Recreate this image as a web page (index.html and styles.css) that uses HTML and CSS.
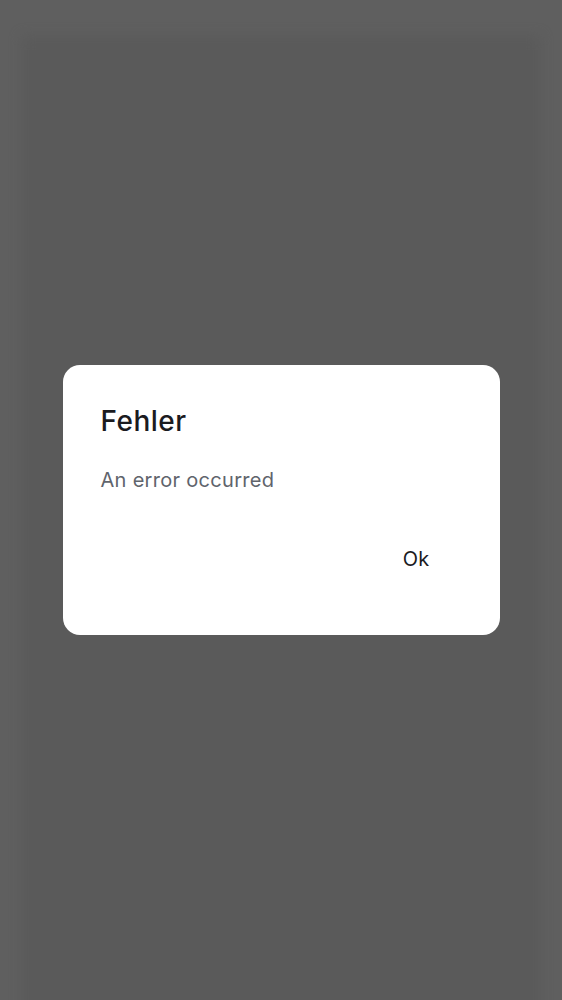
FILE: index.html
```html
<!DOCTYPE html>
<html lang="de">
<head>
<meta charset="utf-8">
<title>Fehler</title>
<link rel="stylesheet" href="styles.css">
</head>
<body>
<div class="screen">
  <div class="backdrop-panel"></div>
  <div class="scrim">
    <div class="dialog" role="alertdialog">
      <h2 class="dialog-title">Fehler</h2>
      <p class="dialog-message">An error occurred</p>
      <div class="dialog-actions">
        <button class="dialog-button">Ok</button>
      </div>
    </div>
  </div>
</div>
</body>
</html>
```
FILE: styles.css
```css
html, body {
  margin: 0;
  padding: 0;
}
body {
  background: #5f5f5f;
  font-family: Inter, Roboto, sans-serif;
}
.screen {
  position: relative;
  width: 562px;
  height: 1000px;
  overflow: hidden;
  background: #5f5f5f;
}
.backdrop-panel {
  position: absolute;
  left: 22px;
  right: 22px;
  top: 36px;
  bottom: -20px;
  background: #5a5a5a;
  filter: blur(6px);
}
.scrim {
  position: relative;
  height: 100%;
  display: flex;
  align-items: center;
  justify-content: center;
}
.dialog {
  box-sizing: border-box;
  width: 437px;
  height: 270px;
  margin-top: -1px;
  background: #ffffff;
  border-radius: 17px;
  padding: 37px 38px 0 38px;
  display: flex;
  flex-direction: column;
}
.dialog-title {
  margin: 0;
  font-size: 28px;
  font-weight: 500;
  line-height: 38px;
  letter-spacing: 0.5px;
  color: #1b1b1f;
}
.dialog-message {
  margin: 26px 0 0 0;
  font-size: 20px;
  line-height: 28px;
  letter-spacing: 0.3px;
  color: #60646c;
}
.dialog-actions {
  display: flex;
  justify-content: flex-end;
  margin-top: 44px;
}
.dialog-button {
  background: none;
  border: none;
  padding: 8px 32px;
  font-family: Inter, Roboto, sans-serif;
  font-size: 20px;
  line-height: 26px;
  letter-spacing: 0.2px;
  color: #1b1b1f;
  cursor: pointer;
}
```
